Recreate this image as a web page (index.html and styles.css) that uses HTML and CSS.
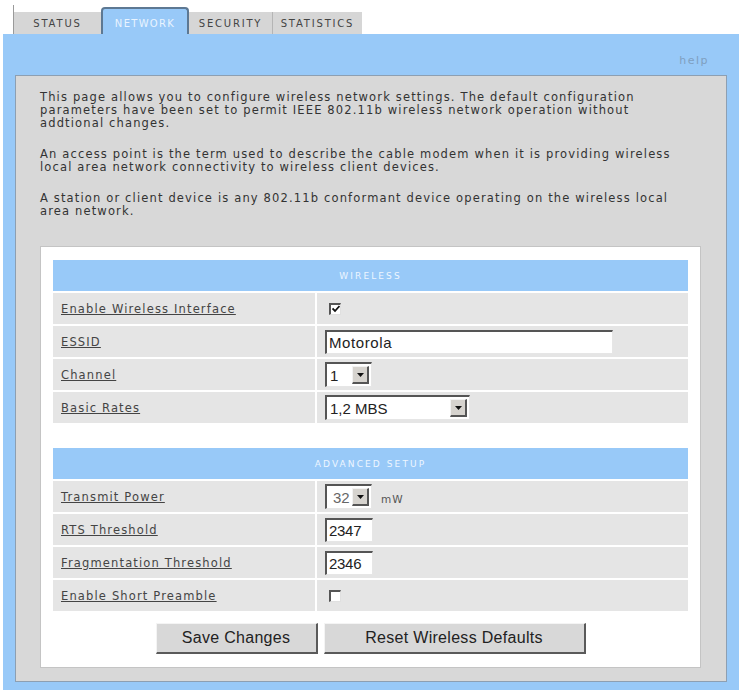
FILE: index.html
```html
<!DOCTYPE html>
<html>
<head>
<meta charset="utf-8">
<title>Network</title>
<link rel="stylesheet" href="styles.css">
</head>
<body>
<div class="tabs">
  <div class="tab tab-status">STATUS</div>
  <div class="tab tab-active">NETWORK</div>
  <div class="tab tab-security">SECURITY</div>
  <div class="tab tab-stats">STATISTICS</div>
</div>
<div class="panel">
  <div class="help">help</div>
  <div class="graybox">
    <p class="intro">This page allows you to configure wireless network settings. The default configuration<br>parameters have been set to permit IEEE 802.11b wireless network operation without<br>addtional changes.</p>
    <p class="intro">An access point is the term used to describe the cable modem when it is providing wireless<br>local area network connectivity to wireless client devices.</p>
    <p class="intro">A station or client device is any 802.11b conformant device operating on the wireless local<br>area network.</p>
    <div class="whitebox">
      <div class="grid">
        <div class="head">WIRELESS</div>
        <div class="lab"><a>Enable Wireless Interface</a></div>
        <div class="val"><span class="chk"><svg width="8" height="8" viewBox="0 0 8 8"><path d="M0.5 3.5 L3 6 L7.5 1" fill="none" stroke="#111" stroke-width="1.8"/></svg></span></div>
        <div class="lab"><a>ESSID</a></div>
        <div class="val"><span class="field field-essid">Motorola</span></div>
        <div class="lab"><a>Channel</a></div>
        <div class="val"><span class="select sel-channel"><span class="sv">1</span><span class="sbtn"><svg width="7" height="4" viewBox="0 0 7 4"><path d="M0 0 H7 L3.5 4 Z" fill="#111"/></svg></span></span></div>
        <div class="lab"><a>Basic Rates</a></div>
        <div class="val"><span class="select sel-rates"><span class="sv">1,2 MBS</span><span class="sbtn"><svg width="7" height="4" viewBox="0 0 7 4"><path d="M0 0 H7 L3.5 4 Z" fill="#111"/></svg></span></span></div>
      </div>
      <div class="grid grid-adv">
        <div class="head">ADVANCED SETUP</div>
        <div class="lab"><a>Transmit Power</a></div>
        <div class="val"><span class="select sel-power"><span class="sv sv-dim">32</span><span class="sbtn"><svg width="7" height="4" viewBox="0 0 7 4"><path d="M0 0 H7 L3.5 4 Z" fill="#111"/></svg></span></span><span class="unit">mW</span></div>
        <div class="lab"><a>RTS Threshold</a></div>
        <div class="val"><span class="field field-num">2347</span></div>
        <div class="lab"><a>Fragmentation Threshold</a></div>
        <div class="val"><span class="field field-num">2346</span></div>
        <div class="lab"><a>Enable Short Preamble</a></div>
        <div class="val"><span class="chk"></span></div>
      </div>
      <div class="buttons">
        <button class="btn btn-save">Save Changes</button>
        <button class="btn btn-reset">Reset Wireless Defaults</button>
      </div>
    </div>
  </div>
</div>
</body>
</html>
```
FILE: styles.css
```css
html, body {
  margin: 0;
  padding: 0;
  background: #ffffff;
}
body {
  width: 739px;
  height: 690px;
  overflow: hidden;
  font-family: "DejaVu Sans", Verdana, sans-serif;
  color: #333;
}
.tabs {
  display: flex;
  align-items: flex-end;
  margin-left: 13px;
  margin-top: 5px;
  height: 29px;
  border-left: 1px solid #9a9a9a;
}
.tab {
  height: 22px;
  box-sizing: border-box;
  background: #d6d6d6;
  font-size: 10px;
  letter-spacing: 1.8px;
  color: #444;
  display: flex;
  align-items: center;
  justify-content: center;
}
.tab-status { width: 87px; }
.tab-security { width: 84px; border-right: 1px solid #b5b5b5; }
.tab-stats { width: 89px; }
.tab-active {
  width: 88px;
  height: 27px;
  background: #98c9f8;
  border: 2px solid #5d7893;
  border-bottom: none;
  border-radius: 4px 4px 0 0;
  color: #e9f4ff;
  padding-top: 3px;
  letter-spacing: 1.3px;
}
.panel {
  margin-left: 3px;
  background: #98c9f8;
  height: 656px;
  box-sizing: border-box;
  padding-top: 20px;
}
.help {
  height: 21px;
  line-height: 14px;
  text-align: right;
  padding-right: 30px;
  font-size: 11px;
  letter-spacing: 1.5px;
  color: #7f9fc0;
}
.graybox {
  margin-left: 12px;
  width: 712px;
  height: 607px;
  box-sizing: border-box;
  background: #d8d8d8;
  border: 1px solid #8d9fb2;
  padding: 15px 25px 11px 24px;
}
.intro {
  margin: 0 0 18px 0;
  font-size: 11.5px;
  line-height: 13px;
  letter-spacing: 1.15px;
  color: #333;
  white-space: nowrap;
}
.intro:last-of-type {
  margin-bottom: 28px;
}
.whitebox {
  background: #ffffff;
  border: 1px solid #c4c4c4;
  padding: 13px 12px 13px 12px;
}
.grid {
  display: grid;
  grid-template-columns: 262px 1fr;
  grid-auto-rows: 31px;
  gap: 2px;
}
.grid-adv {
  margin-top: 25px;
}
.head {
  grid-column: 1 / 3;
  background: #98c9f8;
  color: #eef6ff;
  font-size: 9px;
  letter-spacing: 2.1px;
  display: flex;
  align-items: center;
  justify-content: center;
}
.lab, .val {
  background: #e5e5e5;
  display: flex;
  align-items: center;
}
.lab {
  padding-left: 8px;
  font-size: 11.5px;
  letter-spacing: 1.15px;
}
.lab a {
  color: #444;
  text-decoration: underline;
}
.val {
  padding-left: 8px;
}
.chk {
  width: 12px;
  height: 12px;
  box-sizing: border-box;
  margin-left: 4px;
  background: #fff;
  border-style: solid;
  border-width: 2px 1px 1px 2px;
  border-color: #555 #e0e0e0 #e0e0e0 #555;
  display: flex;
  align-items: center;
  justify-content: center;
}
.field {
  height: 24px;
  box-sizing: border-box;
  background: #fff;
  border-style: solid;
  border-width: 2px 1px 1px 2px;
  border-color: #555 #e6e6e6 #e6e6e6 #555;
  font-family: "Liberation Sans", Arial, sans-serif;
  font-size: 15px;
  color: #222;
  display: flex;
  align-items: center;
  padding-left: 2px;
}
.field-essid { width: 288px; letter-spacing: 0.6px; }
.field-num { width: 48px; letter-spacing: -0.3px; }
.select {
  height: 25px;
  box-sizing: border-box;
  background: #fff;
  border-style: solid;
  border-width: 2px 1px 1px 2px;
  border-color: #555 #e6e6e6 #e6e6e6 #555;
  display: flex;
  align-items: center;
  justify-content: space-between;
  padding-right: 2px;
  font-family: "Liberation Sans", Arial, sans-serif;
  font-size: 15px;
  color: #222;
}
.sv {
  padding-left: 3px;
}
.sv-dim {
  color: #666;
  padding-left: 6px;
}
.sbtn {
  width: 17px;
  height: 18px;
  box-sizing: border-box;
  background: #d6d3ce;
  border-style: solid;
  border-width: 1px 2px 2px 1px;
  border-color: #f2f2f2 #555 #555 #f2f2f2;
  display: flex;
  align-items: center;
  justify-content: center;
}
.sel-channel { width: 47px; }
.sel-rates { width: 145px; }
.sel-power { width: 47px; }
.unit {
  margin-left: 9px;
  margin-top: 4px;
  font-size: 10.5px;
  letter-spacing: 1px;
  color: #555;
}
.buttons {
  display: flex;
  justify-content: center;
  gap: 6px;
  margin-top: 12px;
}
.btn {
  height: 31px;
  box-sizing: border-box;
  background: #d8d8d8;
  border-style: solid;
  border-width: 1px 2px 2px 1px;
  border-color: #f4f4f4 #5a5a5a #5a5a5a #f4f4f4;
  font-family: "Liberation Sans", Arial, sans-serif;
  font-size: 16px;
  letter-spacing: 0.3px;
  color: #222;
  padding: 0;
}
.btn-save { width: 162px; }
.btn-reset { width: 262px; }
```
